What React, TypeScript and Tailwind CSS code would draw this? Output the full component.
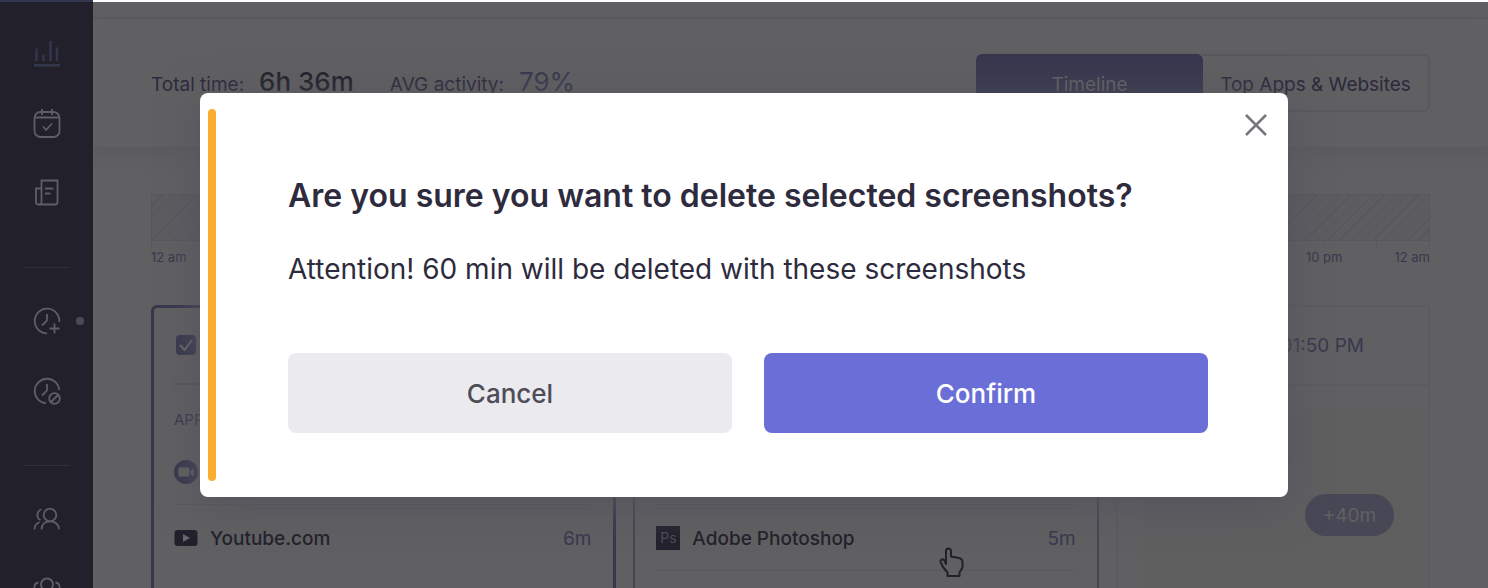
import type { ReactNode } from "react";

type AppRow = {
  icon: ReactNode;
  name?: string;
  time?: string;
};

const iconProps = {
  width: 30,
  height: 30,
  viewBox: "0 0 30 30",
  fill: "none",
  stroke: "currentColor",
  strokeWidth: 1.8,
  "aria-hidden": true,
};

function ChartIcon() {
  return (
    <svg {...iconProps} strokeWidth={2.4}>
      <path d="M4.500 10.500V23M11.500 16.500V23M18.500 3v20M25 9.500V23M2 27.300h26" />
    </svg>
  );
}

function CalendarIcon() {
  return (
    <svg {...iconProps}>
      <rect x="2.500" y="4" width="25" height="25" rx="6" />
      <path d="M3 9.500h24M10 1v6M20 1v6M11 18.500l3 3.500 6-6.500" />
    </svg>
  );
}

function ReportIcon() {
  return (
    <svg {...iconProps}>
      <path d="M9.500 10.500V2.500h16v21.500a2.500 2.500 0 0 1-2.500 2.500H6.500a2.500 2.500 0 0 1-2.500-2.500V10.500h5.500v13.500a2.500 2.500 0 0 1-2.500 2.500" />
      <path d="M13 10.500h8.500M13 15.500h5.500" />
    </svg>
  );
}

function ClockPlusIcon() {
  return (
    <svg {...iconProps}>
      <path d="M27.300 16A12.300 12.300 0 1 0 15 27.300M15 8v6.500l-5 5M22.500 17.500v10M17.500 22.500h10" />
    </svg>
  );
}

function ClockOffIcon() {
  return (
    <svg {...iconProps}>
      <path d="M27.300 14A12.300 12.300 0 1 0 14 27.300M15 8v6.500l-5 5" />
      <circle cx="22.500" cy="22.500" r="5.300" />
      <path d="m19 26 7-7" />
    </svg>
  );
}

function UsersIcon() {
  return (
    <svg {...iconProps}>
      <circle cx="18" cy="11" r="6.300" />
      <path d="M9.500 25.500c0-5 3.500-8.200 8.500-8.200s9 3.200 9 8.200M9.500 5.500c-5 1.500-5.500 8.500-1 10.500M2.500 25.500c0-3.500 1.500-6 5-7.500" />
    </svg>
  );
}

function GroupIcon() {
  return (
    <svg {...iconProps}>
      <circle cx="15" cy="10.500" r="6" />
      <path d="M6 26c0-5.500 3.500-9 9-9s9 3.500 9 9M6.500 8.500c-5 1-5.500 6.500-1 9M23.500 8.500c5 1 5.500 6.500 1 9" />
    </svg>
  );
}

function CameraIcon() {
  return (
    <svg width="24" height="24" viewBox="0 0 24 24" aria-hidden="true">
      <circle cx="12" cy="12" r="12" fill="#37384e" />
      <rect x="4.500" y="7.500" width="11" height="9" rx="1.500" fill="#606062" />
      <path d="m16.500 11 3-3v8.500l-3-3z" fill="#606062" />
    </svg>
  );
}

function YoutubeIcon() {
  return (
    <svg width="24" height="24" viewBox="0 0 24 24" aria-hidden="true">
      <rect x="0.500" y="4" width="23" height="16" rx="3" fill="#22202b" />
      <path d="m9 8 7 4-7 4z" fill="#68686c" />
    </svg>
  );
}

function PhotoshopIcon() {
  return (
    <span className="flex h-6 w-6 items-center justify-center bg-[#22202b] text-sm text-[#4b4b5c]">
      Ps
    </span>
  );
}

function Sidebar() {
  const item = "flex h-[70px] w-full shrink-0 items-center justify-center";
  return (
    <nav className="flex w-[93px] shrink-0 flex-col items-center border-t-2 border-[#34364e] bg-[#22202a] pt-4 text-[#5f5e67]">
      <a href="#stats" aria-label="Statistics" className={`${item} text-[#34364e]`}><ChartIcon /></a>
      <a href="#schedule" aria-label="Schedule" className={item}><CalendarIcon /></a>
      <a href="#reports" aria-label="Reports" className={item}><ReportIcon /></a>
      <div className="mt-[39px] mb-[18px] h-px w-[46px] shrink-0 bg-[#302e3a]" />
      <a href="#add-time" aria-label="Add time" className={`${item} relative`}>
        <ClockPlusIcon />
        <span className="absolute right-[9px] h-2 w-2 rounded-full bg-[#4b4a54]" />
      </a>
      <a href="#time-off" aria-label="Time off" className={item}><ClockOffIcon /></a>
      <div className="mt-[39px] mb-[18px] h-px w-[46px] shrink-0 bg-[#302e3a]" />
      <a href="#members" aria-label="Members" className={item}><UsersIcon /></a>
      <a href="#teams" aria-label="Teams" className={item}><GroupIcon /></a>
    </nav>
  );
}

function Summary() {
  return (
    <header className="flex h-[129px] items-start justify-between border-b border-[#5b5b60] px-[58px] pt-[35px] shadow-[0_4px_12px_#5a5a5e]">
      <div className="flex items-baseline pt-2 text-[#2b2a3b]">
        <span className="text-[19px]">Total time:</span>
        <span className="ml-[15px] text-[26px] font-medium text-[#22202b]">6h 36m</span>
        <span className="ml-9 text-[19px]">AVG activity:</span>
        <span className="ml-[15px] text-[26px] text-[#37384e]">79%</span>
      </div>
      <div className="flex h-[58px] text-[19px]">
        <button className="w-[227px] rounded-md bg-[#37384e] pt-1 text-[#636366]">Timeline</button>
        <button className="w-[227px] rounded-r-md border-2 border-l-0 border-[#59595d] pt-1 text-[#2b2a3b]">
          Top Apps &amp; Websites
        </button>
      </div>
    </header>
  );
}

function DayScale() {
  const ticks = Array.from({ length: 24 });
  return (
    <div>
      <div className="h-[47px] border border-[#58585b] bg-[repeating-linear-gradient(135deg,#5d5c60_0px,#5d5c60_7px,#57575b_7px,#57575b_8px)]" />
      <div className="flex h-1.5 border-l border-[#58585b]">
        {ticks.map((_, i) => (
          <div key={i} className="flex-1 border-r border-[#58585b]" />
        ))}
      </div>
      <div className="flex text-[13px] leading-5 text-[#37384e]">
        <span>12 am</span>
        <span className="ml-auto">10 pm</span>
        <span className="ml-[52px]">12 am</span>
      </div>
    </div>
  );
}

function AppRows({ rows }: { rows: AppRow[] }) {
  return (
    <ul>
      {rows.map((row, i) => (
        <li key={i} className="flex h-[66px] items-center border-b border-[#59595c] text-[19px]">
          {row.icon}
          <span className="ml-3 pt-1 font-medium text-[#22202b]">{row.name}</span>
          <span className="ml-auto pt-1 text-[#37384e]">{row.time}</span>
        </li>
      ))}
    </ul>
  );
}

function Cards() {
  return (
    <div className="grid grid-cols-[465fr_465fr_314fr] gap-[17px]">
      <section className="h-[360px] rounded-md border-[3px] border-[#37384e] pr-[22px] pl-5">
        <div className="flex h-[77px] items-center border-b-2 border-[#57575b] pb-0.5">
          <label className="relative ml-0.5 flex">
            <input
              type="checkbox"
              defaultChecked
              aria-label="Select screenshot"
              className="h-5 w-5 appearance-none rounded-sm bg-[#37384e]"
            />
            <svg className="absolute inset-0" width="20" height="20" viewBox="0 0 20 20" fill="none" stroke="#68686c" strokeWidth="2" aria-hidden="true">
              <path d="m4 10 4.500 5L16 5" />
            </svg>
          </label>
        </div>
        <h2 className="flex h-[54px] items-end pb-2 text-[15px] text-[#37384e]">APPS</h2>
        <div className="[&_li:last-child]:border-transparent">
          <AppRows
            rows={[
              { icon: <CameraIcon /> },
              { icon: <YoutubeIcon />, name: "Youtube.com", time: "6m" },
            ]}
          />
        </div>
      </section>

      <section className="h-[360px] rounded-md border-2 border-[#444557] px-[21px] pt-[132px]">
        <AppRows
          rows={[
            { icon: null },
            { icon: <PhotoshopIcon />, name: "Adobe Photoshop", time: "5m" },
          ]}
        />
      </section>

      <section className="h-[360px] border-2 border-[#5c5c5f]">
        <div className="flex h-[79px] items-center border-b-2 border-[#5c5c5f] pt-0.5 pr-16 text-[19px] text-[#37384e]">
          <span className="ml-auto">01:50 PM</span>
        </div>
        <div className="mt-6 ml-6 flex h-full justify-end bg-[#5f5f60] pt-[84px] pr-[34px]">
          <span className="flex h-[42px] w-[89px] items-center justify-center rounded-full bg-[#474755] pt-0.5 text-[19px] text-[#606062]">
            +40m
          </span>
        </div>
      </section>
    </div>
  );
}

function DeleteDialog() {
  return (
    <div className="absolute inset-x-0 top-0.5 bottom-0 flex items-center justify-center">
      <div
        role="dialog"
        aria-labelledby="dialog-title"
        className="relative flex w-[1088px] max-w-full rounded-lg bg-white px-2 py-4 text-[#2d2b3d] shadow-[0_8px_40px_#55535c]"
      >
        <div className="w-2 shrink-0 rounded-full bg-[#faad2f]" />
        <div className="flex-1 px-[72px] pt-16 pb-12">
          <h1 id="dialog-title" className="text-[32px] leading-[46px] font-semibold">
            Are you sure you want to delete selected screenshots?
          </h1>
          <p className="mt-[30px] text-[28px] leading-10">
            Attention! 60 min will be deleted with these screenshots
          </p>
          <div className="mt-16 grid grid-cols-2 gap-8 text-[26px] font-medium">
            <button className="h-20 rounded-lg bg-[#ebeaef] text-[#4d4c57]">Cancel</button>
            <button className="h-20 rounded-lg bg-[#6a6fd7] text-white">Confirm</button>
          </div>
        </div>
        <button aria-label="Close" className="absolute top-5 right-5 text-[#77767c]">
          <svg width="24" height="24" viewBox="0 0 24 24" fill="none" stroke="currentColor" strokeWidth="2.500" aria-hidden="true">
            <path d="M2 2l20 20M22 2 2 22" />
          </svg>
        </button>
      </div>
    </div>
  );
}

function HandCursor() {
  return (
    <svg
      className="absolute top-[546px] left-[938px]"
      width="28"
      height="34"
      viewBox="0 0 28 34"
      fill="#606062"
      stroke="#22202b"
      strokeWidth="2"
      strokeLinejoin="round"
      aria-hidden="true"
    >
      <path d="M8 18V5a2.500 2.500 0 0 1 5 0v5.500l8 1.500c2.500.500 3.500 2 3.500 4v5.500l-3 5V30H9.500v-3.500L5 21l-2.500-5c-.500-2 2-3.500 3.500-2z" />
    </svg>
  );
}

export default function App() {
  return (
    <div className="relative flex h-screen overflow-hidden bg-[#606062] font-['Inter',sans-serif]">
      <Sidebar />
      <main className="min-w-0 flex-1 overflow-hidden border-t-2 border-white">
        <div className="h-[17px] border-b-2 border-[#5b5b5e]" />
        <Summary />
        <div className="space-y-[38px] px-[58px] pt-[46px]">
          <DayScale />
          <Cards />
        </div>
      </main>
      <HandCursor />
      <DeleteDialog />
    </div>
  );
}
